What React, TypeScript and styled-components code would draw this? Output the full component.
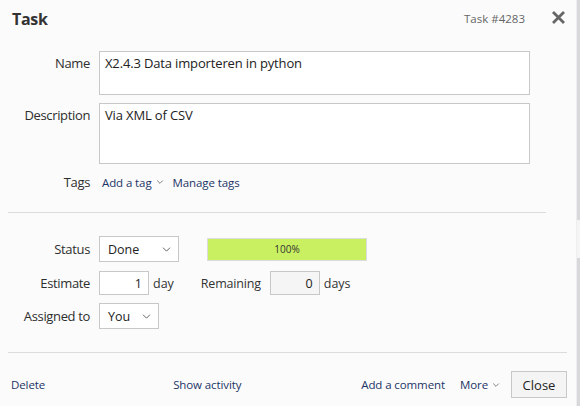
import * as React from 'react';
import styled, { createGlobalStyle } from 'styled-components';

const GlobalStyle = createGlobalStyle`
  html, body {
    margin: 0;
    padding: 0;
    background: #e9e9e9;
  }
  body {
    font-family: "Open Sans", "Liberation Sans", sans-serif;
    font-size: 13px;
    color: #333;
  }
`;

const Page = styled.div`
  display: flex;
  width: 580px;
  height: 406px;
  overflow: hidden;
`;

const Dialog = styled.section`
  width: 577px;
  height: 406px;
  background: #fbfbfb;
  display: flex;
  flex-direction: column;
`;

const Scrollbar = styled.div`
  width: 3px;
  background: linear-gradient(
    to bottom,
    #d6d8db 0,
    #d6d8db 220px,
    #f4f4f4 220px,
    #f4f4f4 258px,
    #d6d8db 258px
  );
  border-left: 1px solid #eee;
`;

const Header = styled.header`
  display: flex;
  align-items: center;
  height: 38px;
  padding: 0 10px 0 12px;
`;

const Title = styled.h1`
  margin: 0;
  font-size: 16px;
  font-weight: 700;
  letter-spacing: -0.3px;
  color: #333;
  flex: 1;
`;

const TaskId = styled.span`
  color: #666;
  font-size: 11.5px;
  margin-right: 26px;
  margin-top: -2px;
`;

const CloseX = styled.button`
  border: none;
  background: none;
  padding: 0;
  width: 15px;
  height: 15px;
  display: flex;
  cursor: pointer;
  margin-top: -4px;
`;

const Body = styled.div`
  padding-top: 13px;
  display: flex;
  flex-direction: column;
`;

const Row = styled.div<{ $mb?: number; $center?: boolean }>`
  display: grid;
  grid-template-columns: 90px auto;
  column-gap: 9px;
  align-items: ${(p) => (p.$center ? 'center' : 'start')};
  margin-bottom: ${(p) => p.$mb ?? 0}px;
`;

const Label = styled.label<{ $top?: boolean }>`
  text-align: right;
  color: #2e2e2e;
  letter-spacing: -0.35px;
  padding-top: ${(p) => (p.$top ? '3px' : '0')};
  white-space: nowrap;
`;

const TextBox = styled.textarea<{ $h: number }>`
  width: 431px;
  height: ${(p) => p.$h}px;
  box-sizing: border-box;
  border: 1px solid #c8c8c8;
  background: #fff;
  padding: 2px 5px;
  font-family: inherit;
  font-size: 13px;
  letter-spacing: -0.15px;
  line-height: 18px;
  color: #222;
  resize: none;
  outline: none;
  display: block;
  margin: 0;
`;

const Inline = styled.div<{ $gap?: number }>`
  display: flex;
  align-items: center;
  gap: ${(p) => p.$gap ?? 0}px;
`;

const Link = styled.a<{ $ml?: number }>`
  color: #1b3566;
  text-decoration: none;
  font-size: 11.5px;
  letter-spacing: -0.1px;
  display: inline-flex;
  align-items: center;
  gap: 4px;
  cursor: pointer;
  margin-left: ${(p) => p.$ml ?? 0}px;
`;

const Divider = styled.hr<{ $w: number }>`
  border: none;
  border-top: 1px solid #dcdcdc;
  margin: 0 0 0 8px;
  width: ${(p) => p.$w}px;
`;

const Fields = styled.div`
  padding: 23px 0 23px 0;
  display: flex;
  flex-direction: column;
`;

const Select = styled.div<{ $w: number }>`
  width: ${(p) => p.$w}px;
  height: 26px;
  box-sizing: border-box;
  border: 1px solid #c8c8c8;
  background: #fff;
  display: flex;
  align-items: center;
  justify-content: space-between;
  padding: 0 7px 0 8px;
  font-size: 12.5px;
  color: #222;
`;

const Progress = styled.div`
  width: 160px;
  height: 23px;
  box-sizing: border-box;
  border: 1px solid #dcdcdc;
  background: #c8f061;
  display: flex;
  align-items: center;
  justify-content: center;
  font-size: 10px;
  color: #333;
  margin-left: 28px;
`;

const NumberBox = styled.div<{ $disabled?: boolean }>`
  width: 50px;
  height: 24px;
  box-sizing: border-box;
  border: 1px solid #c8c8c8;
  background: ${(p) => (p.$disabled ? '#f5f5f5' : '#fff')};
  display: flex;
  align-items: center;
  justify-content: flex-end;
  padding-right: 6px;
  font-size: 12.5px;
  color: #222;
`;

const Unit = styled.span`
  margin-left: 4px;
  font-size: 12.5px;
  color: #333;
`;

const SubLabel = styled.span`
  margin: 0 9px 0 27px;
  font-size: 12.5px;
  letter-spacing: -0.2px;
`;

const Footer = styled.footer`
  display: flex;
  align-items: center;
  padding: 18px 9px 0 11px;
`;

const Spacer = styled.div`
  flex: 1;
`;

const Button = styled.button`
  height: 27px;
  width: 56px;
  box-sizing: border-box;
  border: 1px solid #c8c8c8;
  background: #f4f4f4;
  font-family: inherit;
  font-size: 13px;
  color: #222;
  margin-left: 11px;
  padding: 0;
  cursor: pointer;
`;

function Chevron({ w = 8 }: { w?: number }) {
  return (
    <svg width={w} height={Math.round(w * 0.55)} viewBox="0 0 10 6" fill="none">
      <path d="M0.8 0.8 L5 5 L9.2 0.8" stroke="#555" strokeWidth="1.1" />
    </svg>
  );
}

export default function App(): JSX.Element {
  return (
    <Page>
      <GlobalStyle />
      <Dialog>
        <Header>
          <Title>Task</Title>
          <TaskId>Task #4283</TaskId>
          <CloseX aria-label="close">
            <svg width="15" height="15" viewBox="0 0 15 15">
              <path d="M2 2 L13 13 M13 2 L2 13" stroke="#666" strokeWidth="2.8" />
            </svg>
          </CloseX>
        </Header>

        <Body>
          <Row $mb={8}>
            <Label $top>Name</Label>
            <TextBox $h={44} readOnly value="X2.4.3 Data importeren in python" />
          </Row>
          <Row $mb={9}>
            <Label $top>Description</Label>
            <TextBox $h={61} readOnly value="Via XML of CSV" />
          </Row>
          <Row $mb={21} $center>
            <Label>Tags</Label>
            <Inline $gap={9}>
              <Link $ml={3}>
                Add a tag <Chevron />
              </Link>
              <Link>Manage tags</Link>
            </Inline>
          </Row>
        </Body>

        <Divider $w={538} />

        <Fields>
          <Row $mb={9} $center>
            <Label>Status</Label>
            <Inline>
              <Select $w={80}>
                Done <Chevron w={9} />
              </Select>
              <Progress>100%</Progress>
            </Inline>
          </Row>
          <Row $mb={8} $center>
            <Label>Estimate</Label>
            <Inline>
              <NumberBox>1</NumberBox>
              <Unit>day</Unit>
              <SubLabel>Remaining</SubLabel>
              <NumberBox $disabled>0</NumberBox>
              <Unit>days</Unit>
            </Inline>
          </Row>
          <Row $center>
            <Label>Assigned to</Label>
            <Inline>
              <Select $w={60}>
                You <Chevron w={9} />
              </Select>
            </Inline>
          </Row>
        </Fields>

        <Divider $w={559} />

        <Footer>
          <Link>Delete</Link>
          <Link $ml={128}>Show activity</Link>
          <Spacer />
          <Link>Add a comment</Link>
          <Link $ml={15}>
            More <Chevron />
          </Link>
          <Button>Close</Button>
        </Footer>
      </Dialog>
      <Scrollbar />
    </Page>
  );
}
